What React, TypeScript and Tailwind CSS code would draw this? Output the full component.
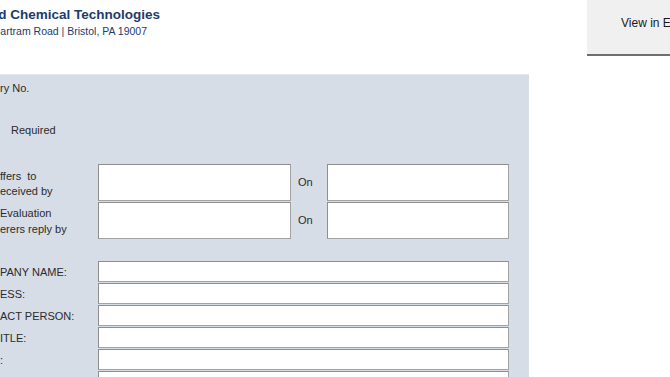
import React from "react";

const font = { fontFamily: '"Liberation Sans", Arial, sans-serif' };

function Box({ className = "" }: { className?: string }) {
  return <div className={"bg-white border border-[#a3a3a3] border-l-[#8e8e8e] border-t-[#8e8e8e] " + className} />;
}

export default function App() {
  const company = ["PANY NAME:", "ESS:", "ACT PERSON:", "ITLE:", ":", "NE NUMBER"];
  return (
    <div className="w-[670px] h-[377px] overflow-hidden bg-white relative text-[#2b2b2b]" style={font}>
      <div className="flex h-[74px]">
        <div className="flex flex-col pt-[7px] w-[587px] shrink-0">
          <div className="flex justify-end w-[160px]">
            <span className="whitespace-nowrap text-[13.5px] font-bold leading-[16px] text-[#1e3b6c]">
              Advanced Chemical Technologies
            </span>
          </div>
          <div className="flex justify-end w-[147px] mt-[1px]">
            <span className="whitespace-nowrap text-[10.5px] leading-[14px] text-[#1e3b6c]">
              2 Bartram Road | Bristol, PA 19007
            </span>
          </div>
        </div>
        <div className="flex-1 min-w-0 overflow-hidden h-[56px] bg-[#f0f0f0] border-b-2 border-[#6f6f6f] flex items-start pt-[14px] pl-[34px]">
          <span className="whitespace-nowrap text-[12px] text-[#1a1a1a]">View in Excel</span>
        </div>
      </div>
      <div className="w-[529px] h-[303px] bg-[#d6dde6] border-t border-[#e4e8ee] text-[11px]">
        <div className="h-[27px] flex items-center">
          <span className="whitespace-nowrap">ry No.</span>
        </div>
        <div className="h-[56px] flex items-center pl-[11px]">
          <span className="whitespace-nowrap">Required</span>
        </div>
        <div className="h-[6px]" />
        <div className="flex flex-col gap-[1px]">
          <div className="flex h-[37px]">
            <div className="w-[98px] flex flex-col justify-center leading-[15px] pt-[2px]">
              <span className="whitespace-nowrap">ffers &nbsp;to</span>
              <span className="whitespace-nowrap">eceived by</span>
            </div>
            <Box className="w-[193px] h-full" />
            <div className="w-[36px] flex items-center pl-[7px]">On</div>
            <Box className="w-[182px] h-full" />
          </div>
          <div className="flex h-[37px]">
            <div className="w-[98px] flex flex-col justify-center leading-[16px]">
              <span className="whitespace-nowrap">Evaluation</span>
              <span className="whitespace-nowrap">erers reply by</span>
            </div>
            <Box className="w-[193px] h-full" />
            <div className="w-[36px] flex items-center pl-[7px]">On</div>
            <Box className="w-[182px] h-full" />
          </div>
        </div>
        <div className="h-[22px]" />
        <div className="flex flex-col gap-[1px]">
          {company.map((l, i) => (
            <div key={i} className="flex h-[21px]">
              <div className="w-[98px] flex items-center pt-[2px]">
                <span className="whitespace-nowrap">{l}</span>
              </div>
              <Box className="w-[411px] h-full" />
            </div>
          ))}
        </div>
      </div>
    </div>
  );
}
